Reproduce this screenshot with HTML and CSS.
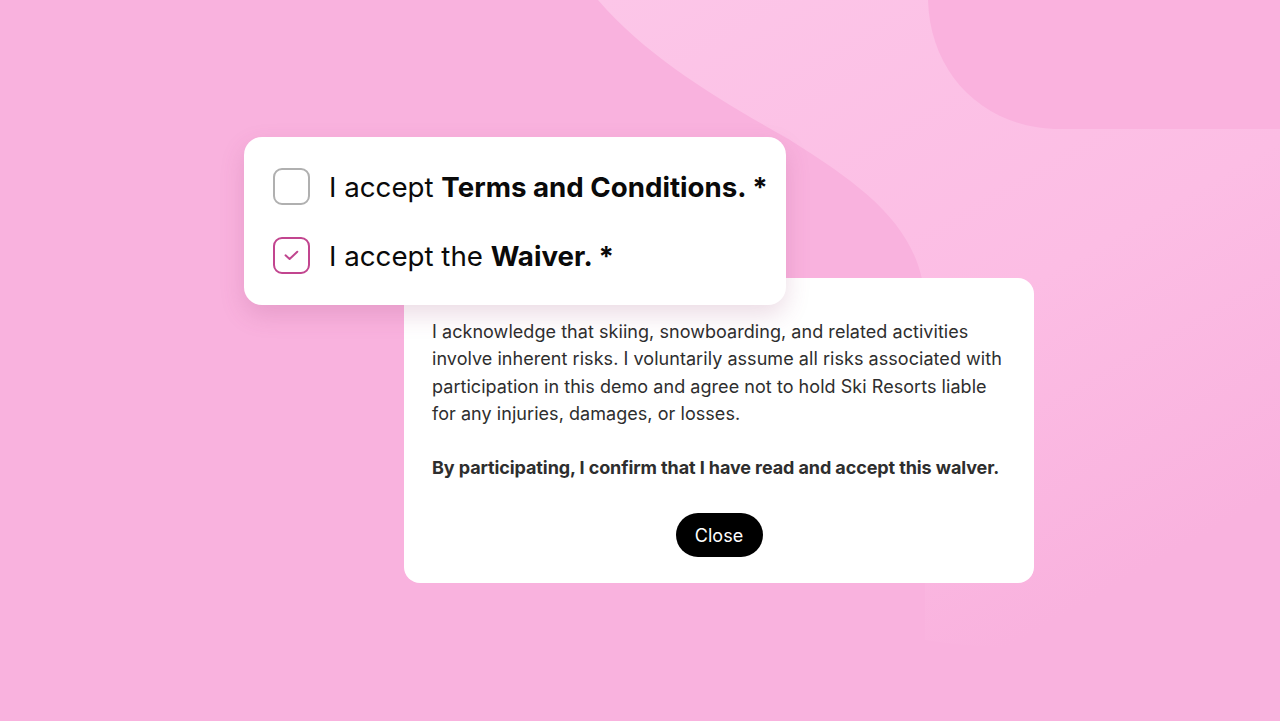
FILE: index.html
```html
<!DOCTYPE html>
<html>
<head>
<meta charset="utf-8">
<link rel="stylesheet" href="styles.css">
</head>
<body>
<svg class="bg" width="1280" height="721" viewBox="0 0 1280 721" xmlns="http://www.w3.org/2000/svg">
  <defs>
    <linearGradient id="lg" x1="0" y1="0" x2="0.6" y2="1">
      <stop offset="0" stop-color="#fcc6e8"/>
      <stop offset="0.6" stop-color="#fcbde4"/>
      <stop offset="1" stop-color="#f9b2de"/>
    </linearGradient>
  </defs>
  <rect width="1280" height="721" fill="#f9b2de"/>
  <path d="M598 0 C650 60 720 100 790 140 C870 190 920 230 925 300 L925 640 C1050 660 1200 640 1280 600 L1280 0 Z" fill="url(#lg)"/>
  <path d="M928 0 L1280 0 L1280 129 L1060 129 C985 129 930 75 928 0 Z" fill="#fab2de"/>
</svg>
<main class="stage">
  <section class="card checks">
    <label class="row">
      <span class="box"></span>
      <span class="label">I accept <b>Terms and Conditions. *</b></span>
    </label>
    <label class="row">
      <span class="box on">
        <svg width="15" height="11" viewBox="0 0 15 11"><path d="M1.5 5.3 L5.6 9 L13.3 1.8" fill="none" stroke="#c0468f" stroke-width="2" stroke-linecap="round" stroke-linejoin="round"/></svg>
      </span>
      <span class="label">I accept the <b>Waiver. *</b></span>
    </label>
  </section>
  <section class="card waiver">
    <p>I acknowledge that skiing, snowboarding, and related activities involve inherent risks. I voluntarily assume all risks associated with participation in this demo and agree not to hold Ski Resorts liable for any injuries, damages, or losses.</p>
    <p class="strong">By participating, I confirm that I have read and accept this walver.</p>
    <div class="actions"><button class="close">Close</button></div>
  </section>
</main>
</body>
</html>
```
FILE: styles.css
```css
html, body {
  margin: 0;
  padding: 0;
  width: 1280px;
  height: 721px;
  overflow: hidden;
  background: #f9b2de;
  font-family: Inter, "Noto Sans", sans-serif;
}
.bg {
  position: absolute;
  left: 0;
  top: 0;
  z-index: 0;
}
.stage {
  position: relative;
  z-index: 1;
  display: flex;
  flex-direction: column;
  align-items: flex-start;
  padding-top: 137px;
}
.card {
  background: #fff;
  box-sizing: border-box;
}
.checks {
  position: relative;
  z-index: 2;
  margin-left: 244px;
  width: 542px;
  height: 168px;
  border-radius: 18px;
  padding: 31px 0 0 29px;
  display: flex;
  flex-direction: column;
  gap: 32px;
  box-shadow: 0 10px 24px rgba(150, 60, 110, 0.18);
}
.row {
  display: flex;
  align-items: center;
  gap: 19px;
  height: 37px;
}
.box {
  width: 37px;
  height: 37px;
  box-sizing: border-box;
  border: 2px solid #b0b0b0;
  border-radius: 9px;
  display: flex;
  align-items: center;
  justify-content: center;
}
.box.on {
  border-color: #c2458f;
}
.label {
  font-size: 27.7px;
  color: #0a0a0a;
}
.label b {
  font-weight: 700;
}
.waiver {
  position: relative;
  z-index: 1;
  margin-left: 404px;
  margin-top: -27px;
  width: 630px;
  border-radius: 16px;
  padding: 40px 28px 26px 28px;
}
.waiver p {
  margin: 0 0 27px 0;
  font-size: 18px;
  line-height: 27.3px;
  letter-spacing: 0.05px;
  color: #2e2e2e;
}
.waiver p.strong {
  font-weight: 700;
  letter-spacing: -0.1px;
  margin-bottom: 32px;
}
.actions {
  display: flex;
  justify-content: center;
}
.close {
  border: none;
  background: #000;
  color: #fff;
  font-family: Inter, "Noto Sans", sans-serif;
  font-size: 18px;
  height: 44px;
  width: 87px;
  border-radius: 22px;
  padding: 0;
}
```
